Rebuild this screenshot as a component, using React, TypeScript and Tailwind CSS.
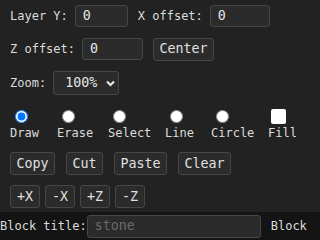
const font = { fontFamily: '"DejaVu Sans Mono", monospace' };

const TextBox = ({ value, width }: { value: string; width: string }) => (
  <div className={`${width} h-[22px] rounded-[3px] border border-[#474747] bg-[#2b2b2b] px-[7px] flex items-center text-[13.33px] text-[#e6e6e6]`}>
    {value}
  </div>
);

const Btn = ({ label, className = "" }: { label: string; className?: string }) => (
  <div className={`h-[23px] rounded-[3px] border border-[#474747] bg-[#2b2b2b] flex items-center justify-center text-[13.33px] text-[#e0e0e0] ${className}`}>
    {label}
  </div>
);

export default function App() {
  const tools = [
    { name: "Draw", w: "w-[47px]", checked: true },
    { name: "Erase", w: "w-[51px]" },
    { name: "Select", w: "w-[57px]" },
    { name: "Line", w: "w-[46px]" },
    { name: "Circle", w: "w-[57px]" },
  ];

  return (
    <div style={font} className="w-[320px] h-[240px] overflow-hidden bg-[#222222] text-[12px] text-[#dcdcdc] flex flex-col">
      <div className="px-[10px] pt-[5px] flex-1">
        <div className="flex items-center h-[22px]">
          <span>Layer Y:</span>
          <div className="ml-[7px]">
            <TextBox value="0" width="w-[53px]" />
          </div>
          <span className="ml-[10px]">X offset:</span>
          <div className="ml-[7px]">
            <TextBox value="0" width="w-[60px]" />
          </div>
        </div>

        <div className="flex items-center h-[22px] mt-[11px]">
          <span>Z offset:</span>
          <div className="ml-[7px]">
            <TextBox value="0" width="w-[61px]" />
          </div>
          <Btn label="Center" className="ml-[10px] w-[61px] h-[22px]" />
        </div>

        <div className="flex items-center h-[24px] mt-[11px]">
          <span>Zoom:</span>
          <div className="ml-[7px] w-[66px] h-[24px] rounded-[3px] border border-[#474747] bg-[#2b2b2b] flex items-center pl-[11px] text-[13.33px] text-[#e6e6e6]">
            <span>100%</span>
            <svg width="9" height="7" viewBox="0 0 9 7" className="ml-[9px]">
              <path d="M1 1.5 L4.5 5 L8 1.5" fill="none" stroke="#e6e6e6" strokeWidth="2.2" />
            </svg>
          </div>
        </div>

        <div className="flex mt-[15px]">
          {tools.map((t) => (
            <div key={t.name} className={`${t.w} flex flex-col items-start`}>
              <input
                type="radio"
                name="tool"
                defaultChecked={t.checked}
                className="m-0 ml-[5px] w-[13px] h-[13px]"
              />
              <span className="mt-[3px] leading-[14px]">{t.name}</span>
            </div>
          ))}
          <div className="flex flex-col items-start -mt-[1px]">
            <div className="ml-[3px] w-[15px] h-[15px] rounded-[2px] bg-white" />
            <span className="mt-[2px] leading-[14px]">Fill</span>
          </div>
        </div>

        <div className="flex gap-[11px] mt-[12px]">
          <Btn label="Copy" className="w-[45px]" />
          <Btn label="Cut" className="w-[37px]" />
          <Btn label="Paste" className="w-[53px]" />
          <Btn label="Clear" className="w-[53px]" />
        </div>

        <div className="flex gap-[5px] mt-[10px]">
          <Btn label="+X" className="w-[30px]" />
          <Btn label="-X" className="w-[30px]" />
          <Btn label="+Z" className="w-[30px]" />
          <Btn label="-Z" className="w-[30px]" />
        </div>
      </div>

      <div className="h-[28px] bg-[#141414] flex items-center whitespace-nowrap shrink-0">
        <span>Block title:</span>
        <div className="w-[174px] h-[23px] rounded-[3px] border border-[#474747] bg-[#2b2b2b] px-[7px] flex items-center text-[13.33px] text-[#6a6a6a]">
          stone
        </div>
        <span className="ml-[10px]">Block</span>
      </div>
    </div>
  );
}
